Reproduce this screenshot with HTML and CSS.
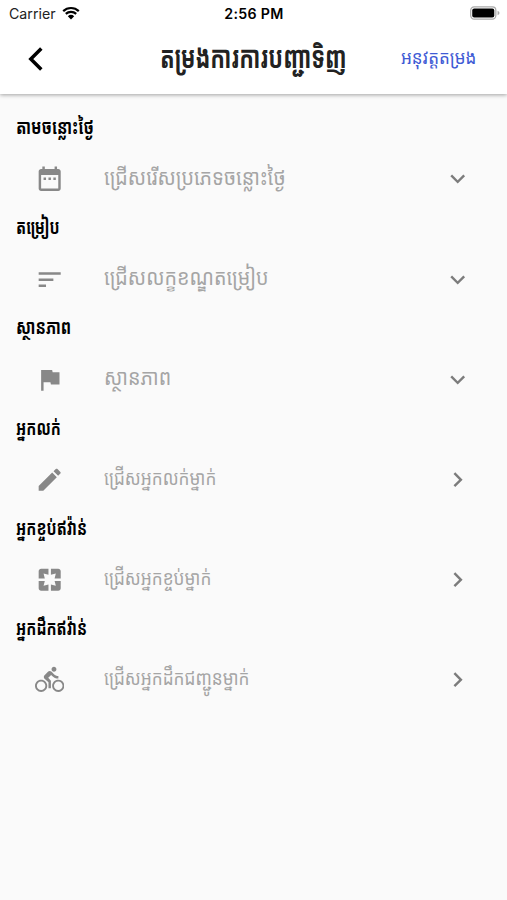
FILE: index.html
```html
<!DOCTYPE html>
<html lang="km">
<head>
<meta charset="utf-8">
<title>តម្រងការការបញ្ជាទិញ</title>
<link rel="stylesheet" href="styles.css">
</head>
<body>
<header class="top">
  <div class="status">
    <div class="carrier"><span>Carrier</span>
      <svg class="wifi" viewBox="0 0 18 14"><path d="M1.2 5.1a11.4 11.4 0 0 1 15.6 0M3.8 7.9a7.7 7.7 0 0 1 10.4 0" fill="none" stroke="#000" stroke-width="2.2"/><path d="M5.8 10.2a4.8 4.8 0 0 1 6.4 0L9 13.5z"/></svg>
    </div>
    <div class="time">2:56 PM</div>
    <svg class="battery" viewBox="0 0 31 14"><rect x=".7" y=".7" width="26" height="12.6" rx="3.6" fill="#fff" stroke="#aaa" stroke-width="1.3"/><rect x="2.3" y="2.3" width="22.8" height="9.4" rx="2"/><path d="M28.5 4.7q2 1 2 2.3t-2 2.3z" fill="#aaa"/></svg>
  </div>
  <nav class="bar">
    <svg class="back" viewBox="0 0 16 24"><path d="M13.3 1.5 2.8 12l10.5 10.5" fill="none" stroke="#000" stroke-width="3.5"/></svg>
    <h1 class="title"><span class="fit">តម្រងការការបញ្ជាទិញ</span></h1>
    <a class="apply"><span class="fit">អនុវត្តតម្រង</span></a>
  </nav>
</header>
<main class="filters">
  <section class="group">
    <h2 class="label wide"><span class="fit">តាមចន្លោះថ្ងៃ</span></h2>
    <div class="row"><svg class="icon" viewBox="0 0 24 24"><path d="M9 11H7v2h2v-2zm4 0h-2v2h2v-2zm4 0h-2v2h2v-2zm2-7h-1V2h-2v2H8V2H6v2H5c-1.1 0-2 .9-2 2v14c0 1.1.9 2 2 2h14c1.1 0 2-.9 2-2V6c0-1.1-.9-2-2-2zm0 16H5V9h14v11z"/></svg><span class="hint"><span class="fit">ជ្រើសរើសប្រភេទចន្លោះថ្ងៃ</span></span><svg class="chev" viewBox="0 0 24 24"><path d="M7.4 8.6 12 13.2l4.6-4.6L18 10l-6 6-6-6z"/></svg></div>
  </section>
  <section class="group">
    <h2 class="label"><span class="fit">តម្រៀប</span></h2>
    <div class="row"><svg class="icon" viewBox="0 0 24 24"><path d="M3 18h6v-2H3v2zM3 6v2h18V6H3zm0 7h12v-2H3v2z"/></svg><span class="hint"><span class="fit">ជ្រើសលក្ខខណ្ឌតម្រៀប</span></span><svg class="chev" viewBox="0 0 24 24"><path d="M7.4 8.6 12 13.2l4.6-4.6L18 10l-6 6-6-6z"/></svg></div>
  </section>
  <section class="group">
    <h2 class="label wide"><span class="fit">ស្ថានភាព</span></h2>
    <div class="row"><svg class="icon" viewBox="0 0 24 24"><path d="M14.4 6 14 4H5v17h2v-7h5.6l.4 2h7V6z"/></svg><span class="hint"><span class="fit">ស្ថានភាព</span></span><svg class="chev" viewBox="0 0 24 24"><path d="M7.4 8.6 12 13.2l4.6-4.6L18 10l-6 6-6-6z"/></svg></div>
  </section>
  <section class="group">
    <h2 class="label"><span class="fit">អ្នកលក់</span></h2>
    <div class="row"><svg class="icon" viewBox="0 0 24 24"><path d="M3 17.25V21h3.75L17.81 9.94l-3.75-3.75L3 17.25zM20.71 7.04c.39-.39.39-1.02 0-1.41l-2.34-2.34c-.39-.39-1.02-.39-1.41 0l-1.83 1.83 3.75 3.75 1.83-1.83z"/></svg><span class="hint small"><span class="fit">ជ្រើសអ្នកលក់ម្នាក់</span></span><svg class="chev" viewBox="0 0 24 24"><path d="M10 6 8.6 7.4l4.6 4.6-4.6 4.6L10 18l6-6z"/></svg></div>
  </section>
  <section class="group">
    <h2 class="label"><span class="fit">អ្នកខ្ចប់ឥវ៉ាន់</span></h2>
    <div class="row"><svg class="icon" viewBox="0 0 24 24"><path d="M3 5v6h5L7 7l4 1V3H5c-1.1 0-2 .9-2 2zm5 8H3v6c0 1.1.9 2 2 2h6v-5l-4 1 1-4zm9 4-4-1v5h6c1.1 0 2-.9 2-2v-6h-5l1 4zm2-14h-6v5l4-1-1 4h5V5c0-1.1-.9-2-2-2z"/></svg><span class="hint small"><span class="fit">ជ្រើសអ្នកខ្ចប់ម្នាក់</span></span><svg class="chev" viewBox="0 0 24 24"><path d="M10 6 8.6 7.4l4.6 4.6-4.6 4.6L10 18l6-6z"/></svg></div>
  </section>
  <section class="group">
    <h2 class="label"><span class="fit">អ្នកដឹកឥវ៉ាន់</span></h2>
    <div class="row"><svg class="icon" viewBox="0 0 24 24"><path d="M15.5 5.5c1.1 0 2-.9 2-2s-.9-2-2-2-2 .9-2 2 .9 2 2 2zM5 12c-2.8 0-5 2.2-5 5s2.2 5 5 5 5-2.2 5-5-2.2-5-5-5zm0 8.5c-1.9 0-3.5-1.6-3.5-3.5s1.6-3.5 3.5-3.5 3.5 1.6 3.5 3.5-1.6 3.5-3.5 3.5zm5.8-10 2.4-2.4.8.8c1.3 1.3 3 2.1 5.1 2.1V9c-1.5 0-2.7-.6-3.6-1.5l-1.9-1.9c-.5-.4-1-.6-1.6-.6s-1.1.2-1.4.6L7.8 8.4c-.4.4-.6.9-.6 1.4 0 .6.2 1.1.6 1.4L11 14v5h2v-6.2l-2.2-2.3zM19 12c-2.8 0-5 2.2-5 5s2.2 5 5 5 5-2.2 5-5-2.2-5-5-5zm0 8.5c-1.9 0-3.5-1.6-3.5-3.5s1.6-3.5 3.5-3.5 3.5 1.6 3.5 3.5-1.6 3.5-3.5 3.5z"/></svg><span class="hint small"><span class="fit">ជ្រើសអ្នកដឹកជញ្ជូនម្នាក់</span></span><svg class="chev" viewBox="0 0 24 24"><path d="M10 6 8.6 7.4l4.6 4.6-4.6 4.6L10 18l6-6z"/></svg></div>
  </section>
</main>
</body>
</html>
```
FILE: styles.css
```css
* { box-sizing: border-box; }
body { margin: 0; min-height: 900px; background: #fafafa; font-family: "Kantumruy", "Noto Sans Khmer", "Khmer OS", Inter, "DejaVu Sans", sans-serif; color: #000; overflow: hidden; }
.top { height: 94px; background: #fff; box-shadow: 0 1px 4px rgba(0,0,0,.36); }
.status { height: 27px; display: grid; grid-template-columns: 1fr auto 1fr; align-items: center; padding: 0 7px 0 9px; font-family: Inter, sans-serif; font-size: 14.2px; }
.carrier { display: flex; align-items: center; gap: 6px; color: #222; }
.wifi { width: 18px; height: 14px; margin-top: -2px; }
.time { font-weight: 600; font-size: 14.2px; letter-spacing: .35px; margin-right: 1px; }
.battery { width: 30px; height: 14px; justify-self: end; margin-top: -1px; }
.bar { height: 63px; display: grid; grid-template-columns: 160px 187px 1fr; align-items: center; }
.back { width: 16px; height: 24px; margin: 1px 0 0 28px; }
.title { margin: -6px 0 0; font-size: 25px; line-height: 40px; font-weight: 700; color: #222; white-space: nowrap; }
.apply { margin: -3px 0 0 54px; font-size: 16px; line-height: 30px; color: #3f5bd5; white-space: nowrap; }
.fit { display: inline-block; transform-origin: 0 50%; }
.title .fit { transform: scale(.868, 1.24); }
.apply .fit { transform: scale(1.065, 1.15); }
.label .fit { transform: scale(.875, 1.2); }
.label.wide .fit { transform: scale(.91, 1.2); }
.hint .fit { transform: scale(1.037, 1.17); }
.hint.small .fit { transform: scale(1.012, 1.17); }
.filters { padding-top: 9px; }
.group { height: 100.2px; }
.label { margin: 0; padding-left: 15.5px; height: 50px; font-size: 17px; line-height: 48px; font-weight: 700; white-space: nowrap; }
.row { height: 50.2px; display: grid; grid-template-columns: 68.5px 1fr 29.4px; align-items: center; padding: 0 34.5px 0 35px; }
.icon { width: 29.4px; height: 29.4px; margin-top: 2px; fill: #888; }
.hint { font-size: 19px; line-height: 48px; height: 50px; color: #a5a5a5; white-space: nowrap; }
.hint.small { font-size: 17px; }
.chev { width: 29.4px; height: 29.4px; margin-top: 2px; fill: #7c7c7c; }
```
